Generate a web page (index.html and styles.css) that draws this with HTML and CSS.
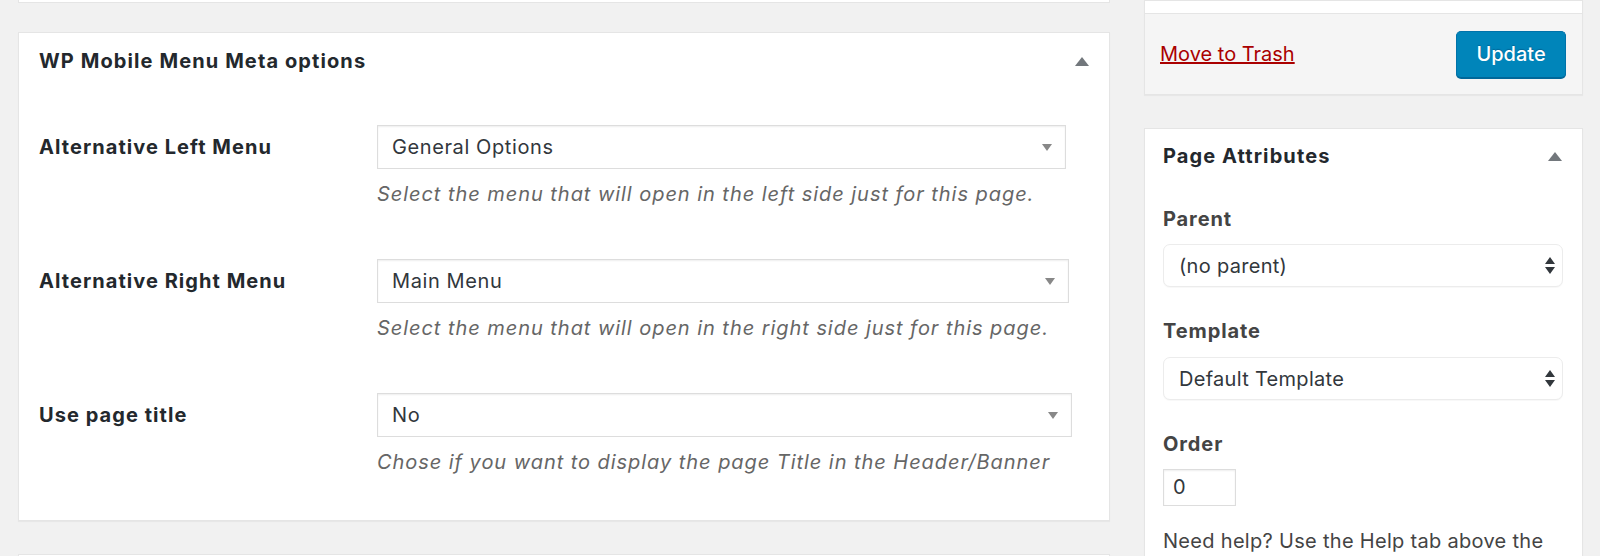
FILE: index.html
```html
<!DOCTYPE html>
<html>
<head>
<meta charset="utf-8">
<title>Edit Page</title>
<link rel="stylesheet" href="styles.css">
</head>
<body>
<div class="wrap">
  <div class="main">
    <div class="prev-panel"></div>
    <div class="postbox">
      <div class="hndle">
        <h2 class="hndle-title">WP Mobile Menu Meta options</h2>
        <svg class="toggle" width="14" height="9" viewBox="0 0 14 9"><path d="M7 0 L14 9 L0 9 Z" fill="#72777c"/></svg>
      </div>
      <div class="opts">
        <div class="row">
          <div class="row-label">Alternative Left Menu</div>
          <div class="field">
            <div class="select w1"><span>General Options</span><svg width="10" height="7" viewBox="0 0 10 7"><path d="M0 0 L10 0 L5 7 Z" fill="#888"/></svg></div>
            <p class="desc">Select the menu that will open in the left side just for this page.</p>
          </div>
        </div>
        <div class="row">
          <div class="row-label">Alternative Right Menu</div>
          <div class="field">
            <div class="select w2"><span>Main Menu</span><svg width="10" height="7" viewBox="0 0 10 7"><path d="M0 0 L10 0 L5 7 Z" fill="#888"/></svg></div>
            <p class="desc">Select the menu that will open in the right side just for this page.</p>
          </div>
        </div>
        <div class="row">
          <div class="row-label">Use page title</div>
          <div class="field">
            <div class="select w3"><span>No</span><svg width="10" height="7" viewBox="0 0 10 7"><path d="M0 0 L10 0 L5 7 Z" fill="#888"/></svg></div>
            <p class="desc">Chose if you want to display the page Title in the Header/Banner</p>
          </div>
        </div>
      </div>
    </div>
    <div class="postbox next-panel"></div>
  </div>
  <div class="side">
    <div class="publish">
      <div class="pub-top"></div>
      <div class="pub-actions">
        <a class="trash" href="#">Move to Trash</a>
        <button class="update">Update</button>
      </div>
    </div>
    <div class="postbox attrs">
      <div class="hndle side-hndle">
        <h2 class="hndle-title">Page Attributes</h2>
        <svg class="toggle" width="14" height="9" viewBox="0 0 14 9"><path d="M7 0 L14 9 L0 9 Z" fill="#72777c"/></svg>
      </div>
      <div class="inside">
        <p class="attr-label first">Parent</p>
        <div class="nselect"><span>(no parent)</span><svg width="10" height="17" viewBox="0 0 10 17"><path d="M5 0 L10 7 L0 7 Z M0 10 L10 10 L5 17 Z" fill="#32373c"/></svg></div>
        <p class="attr-label">Template</p>
        <div class="nselect tight"><span>Default Template</span><svg width="10" height="17" viewBox="0 0 10 17"><path d="M5 0 L10 7 L0 7 Z M0 10 L10 10 L5 17 Z" fill="#32373c"/></svg></div>
        <p class="attr-label">Order</p>
        <div class="order-input">0</div>
        <p class="help">Need help? Use the Help tab above the</p>
      </div>
    </div>
  </div>
</div>
</body>
</html>
```
FILE: styles.css
```css
html, body {
  margin: 0;
  padding: 0;
}
body {
  background: #f1f1f1;
  font-family: Inter, "Liberation Sans", sans-serif;
  color: #444;
  font-size: 20px;
  overflow: hidden;
}
.wrap {
  display: flex;
  align-items: flex-start;
  gap: 34px;
  padding-left: 18px;
}
.main {
  width: 1092px;
  flex: none;
}
.side {
  width: 439px;
  flex: none;
}
.prev-panel {
  height: 2px;
  background: #fff;
  border: 1px solid #e5e5e5;
  border-top: none;
  margin-bottom: 29px;
}
.postbox {
  background: #fff;
  border: 1px solid #e5e5e5;
  box-shadow: 0 1px 1px rgba(0, 0, 0, 0.04);
  box-sizing: border-box;
}
.hndle {
  display: flex;
  justify-content: space-between;
  align-items: center;
  padding: 14px 20px 0 20px;
}
.hndle-title {
  margin: 0;
  font-size: 20px;
  line-height: 28px;
  font-weight: 700;
  color: #23282d;
  letter-spacing: 1.1px;
}
.toggle {
  display: block;
}
.opts {
  padding: 50px 0 46px 20px;
}
.row {
  display: flex;
}
.row + .row {
  margin-top: 53px;
}
.row-label {
  width: 338px;
  flex: none;
  padding-top: 10px;
  line-height: 24px;
  font-weight: 700;
  color: #23282d;
  letter-spacing: 1.05px;
}
.select {
  height: 44px;
  box-sizing: border-box;
  border: 1px solid #ddd;
  box-shadow: inset 0 1px 2px rgba(0, 0, 0, 0.07);
  background: #fff;
  display: flex;
  align-items: center;
  justify-content: space-between;
  padding: 0 13px 0 14px;
  color: #32373c;
  line-height: 24px;
  letter-spacing: 0.6px;
}
.w1 { width: 689px; }
.w2 { width: 692px; }
.w3 { width: 695px; }
.desc {
  margin: 13px 0 0 0;
  line-height: 24px;
  font-style: italic;
  color: #666;
  letter-spacing: 0.95px;
}
.next-panel {
  margin-top: 33px;
  height: 40px;
}
.publish {
  background: #fff;
  border: 1px solid #e5e5e5;
  box-shadow: 0 1px 1px rgba(0, 0, 0, 0.04);
}
.pub-top {
  height: 12px;
  border-bottom: 1px solid #e5e5e5;
}
.pub-actions {
  height: 80px;
  background: #f5f5f5;
  display: flex;
  align-items: center;
  justify-content: space-between;
  padding: 0 16px 0 15px;
}
.trash {
  color: #a00;
  text-decoration: underline;
  line-height: 24px;
}
.update {
  width: 110px;
  height: 47px;
  box-sizing: border-box;
  background: #0085ba;
  border: 1px solid #0073aa;
  border-bottom-color: #006799;
  border-radius: 5px;
  box-shadow: 0 1px 0 #006799;
  color: #fff;
  font-family: inherit;
  font-size: 20px;
  font-weight: 500;
  text-shadow: 0 -1px 1px #006799;
  padding: 0;
}
.attrs {
  margin-top: 33px;
  height: 460px;
}
.side-hndle {
  padding: 13px 20px 0 18px;
}
.inside {
  padding: 0 19px 0 18px;
}
.attr-label {
  margin: 30px 0 0 0;
  line-height: 28px;
  font-weight: 700;
  color: #444;
  letter-spacing: 0.9px;
}
.attr-label.first {
  margin-top: 35px;
}
.nselect {
  margin-top: 11px;
  height: 43px;
  box-sizing: border-box;
  border: 1px solid #ececec;
  border-radius: 7px;
  box-shadow: 0 1px 1px rgba(0, 0, 0, 0.03);
  background: #fff;
  display: flex;
  align-items: center;
  justify-content: space-between;
  padding: 0 7px 0 15px;
  color: #32373c;
  line-height: 24px;
  letter-spacing: 0.3px;
}
.nselect.tight {
  margin-top: 12px;
}
.order-input {
  margin-top: 11px;
  width: 73px;
  height: 37px;
  box-sizing: border-box;
  border: 1px solid #ddd;
  box-shadow: inset 0 1px 2px rgba(0, 0, 0, 0.07);
  padding-left: 9px;
  line-height: 35px;
  color: #32373c;
  background: #fff;
}
.help {
  margin: 21px 0 0 0;
  line-height: 28px;
  color: #444;
  letter-spacing: 0.3px;
}
```
